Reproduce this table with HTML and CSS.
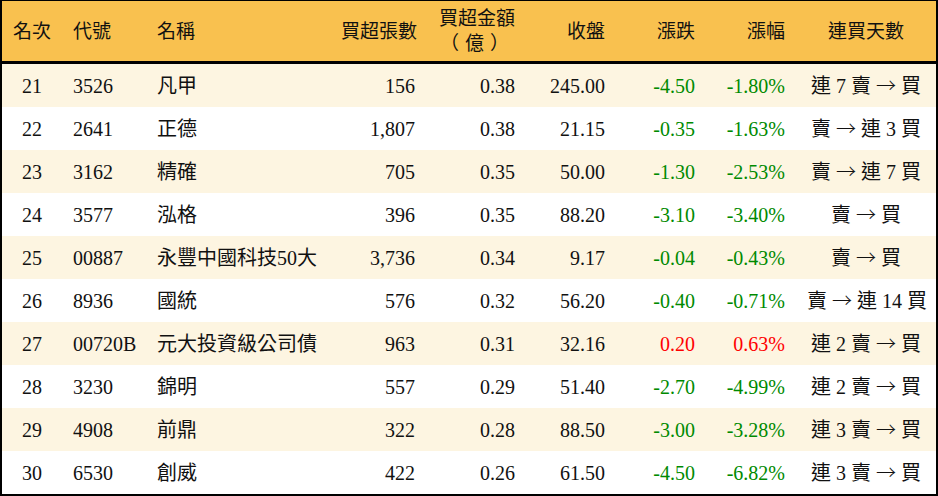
FILE: index.html
```html
<!DOCTYPE html>
<html lang="zh-Hant">
<head>
<meta charset="utf-8">
<title>買超排行</title>
<link rel="stylesheet" href="styles.css">
</head>
<body>
<table class="rank">
  <colgroup>
    <col class="c-rank"><col class="c-code"><col class="c-name"><col class="c-vol"><col class="c-amt"><col class="c-close"><col class="c-chg"><col class="c-pct"><col class="c-streak">
  </colgroup>
  <thead>
    <tr>
      <th class="ctr">名次</th>
      <th class="lft">代號</th>
      <th class="lft">名稱</th>
      <th class="rgt">買超張數</th>
      <th class="rgt">買超金額<br><span class="unit">（億）</span></th>
      <th class="rgt">收盤</th>
      <th class="rgt">漲跌</th>
      <th class="rgt">漲幅</th>
      <th class="ctr">連買天數</th>
    </tr>
  </thead>
  <tbody>
    <tr class="alt"><td class="ctr">21</td><td class="lft">3526</td><td class="lft">凡甲</td><td class="rgt">156</td><td class="rgt">0.38</td><td class="rgt">245.00</td><td class="rgt down">-4.50</td><td class="rgt down">-1.80%</td><td class="ctr">連 7 賣 <span class="arr">→</span> 買</td></tr>
    <tr><td class="ctr">22</td><td class="lft">2641</td><td class="lft">正德</td><td class="rgt">1,807</td><td class="rgt">0.38</td><td class="rgt">21.15</td><td class="rgt down">-0.35</td><td class="rgt down">-1.63%</td><td class="ctr">賣 <span class="arr">→</span> 連 3 買</td></tr>
    <tr class="alt"><td class="ctr">23</td><td class="lft">3162</td><td class="lft">精確</td><td class="rgt">705</td><td class="rgt">0.35</td><td class="rgt">50.00</td><td class="rgt down">-1.30</td><td class="rgt down">-2.53%</td><td class="ctr">賣 <span class="arr">→</span> 連 7 買</td></tr>
    <tr><td class="ctr">24</td><td class="lft">3577</td><td class="lft">泓格</td><td class="rgt">396</td><td class="rgt">0.35</td><td class="rgt">88.20</td><td class="rgt down">-3.10</td><td class="rgt down">-3.40%</td><td class="ctr">賣 <span class="arr">→</span> 買</td></tr>
    <tr class="alt"><td class="ctr">25</td><td class="lft">00887</td><td class="lft">永豐中國科技50大</td><td class="rgt">3,736</td><td class="rgt">0.34</td><td class="rgt">9.17</td><td class="rgt down">-0.04</td><td class="rgt down">-0.43%</td><td class="ctr">賣 <span class="arr">→</span> 買</td></tr>
    <tr><td class="ctr">26</td><td class="lft">8936</td><td class="lft">國統</td><td class="rgt">576</td><td class="rgt">0.32</td><td class="rgt">56.20</td><td class="rgt down">-0.40</td><td class="rgt down">-0.71%</td><td class="ctr">賣 <span class="arr">→</span> 連 14 買</td></tr>
    <tr class="alt"><td class="ctr">27</td><td class="lft">00720B</td><td class="lft">元大投資級公司債</td><td class="rgt">963</td><td class="rgt">0.31</td><td class="rgt">32.16</td><td class="rgt up">0.20</td><td class="rgt up">0.63%</td><td class="ctr">連 2 賣 <span class="arr">→</span> 買</td></tr>
    <tr><td class="ctr">28</td><td class="lft">3230</td><td class="lft">錦明</td><td class="rgt">557</td><td class="rgt">0.29</td><td class="rgt">51.40</td><td class="rgt down">-2.70</td><td class="rgt down">-4.99%</td><td class="ctr">連 2 賣 <span class="arr">→</span> 買</td></tr>
    <tr class="alt"><td class="ctr">29</td><td class="lft">4908</td><td class="lft">前鼎</td><td class="rgt">322</td><td class="rgt">0.28</td><td class="rgt">88.50</td><td class="rgt down">-3.00</td><td class="rgt down">-3.28%</td><td class="ctr">連 3 賣 <span class="arr">→</span> 買</td></tr>
    <tr><td class="ctr">30</td><td class="lft">6530</td><td class="lft">創威</td><td class="rgt">422</td><td class="rgt">0.26</td><td class="rgt">61.50</td><td class="rgt down">-4.50</td><td class="rgt down">-6.82%</td><td class="ctr">連 3 賣 <span class="arr">→</span> 買</td></tr>
  </tbody>
</table>
</body>
</html>
```
FILE: styles.css
```css
html, body {
  margin: 0;
  padding: 0;
  background: #ffffff;
}

.rank {
  width: 938px;
  table-layout: fixed;
  border-collapse: separate;
  border-spacing: 0;
  border-style: solid;
  border-color: #000;
  border-width: 1px 2px 2px 2px;
  font-family: "Liberation Serif", "Noto Sans CJK TC", serif;
  font-size: 20px;
  color: #111;
}

.c-rank { width: 60px; }
.c-code { width: 84px; }
.c-name { width: 184px; }
.c-vol { width: 96px; }
.c-amt { width: 100px; }
.c-close { width: 90px; }
.c-chg { width: 90px; }
.c-pct { width: 90px; }
.c-streak { width: 140px; }

.rank th {
  height: 60px;
  padding: 0 11px;
  background: #f9c14f;
  border-bottom: 3px solid #000;
  font-weight: normal;
  font-size: 19px;
  line-height: 23px;
  white-space: nowrap;
  vertical-align: middle;
}

.unit {
  font-family: "Noto Sans CJK TC", sans-serif;
  letter-spacing: 6px;
}

.rank td {
  height: 43px;
  padding: 0 11px;
  line-height: 22px;
  white-space: nowrap;
  vertical-align: middle;
}

.arr {
  font-family: "Noto Sans CJK TC", sans-serif;
  font-weight: 300;
}

.rank tbody tr.alt td {
  background: #fdf5e1;
}

.ctr { text-align: center; }
.lft { text-align: left; }
.rgt { text-align: right; }

.down { color: #008a00; }
.up { color: #ff0000; }
```
